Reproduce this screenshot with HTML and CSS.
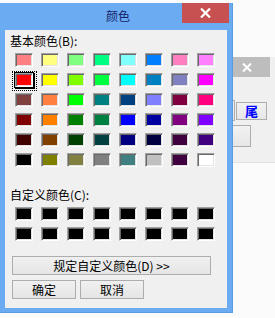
FILE: index.html
```html
<!DOCTYPE html>
<html lang="zh-CN">
<head>
<meta charset="utf-8">
<title>颜色</title>
<link rel="stylesheet" href="styles.css">
</head>
<body>
<div class="desktop">
  <div class="bgwin">
    <div class="bg-title">
      <span class="bg-close"><svg width="10" height="9" viewBox="0 0 10 9"><path d="M1 0.5 L9 8.5 M9 0.5 L1 8.5" stroke="#fff" stroke-width="2"/></svg></span>
    </div>
    <div class="bg-body">
      <div class="bg-row">
        <span class="bg-btn ghost"></span>
        <span class="bg-btn blue">尾</span>
      </div>
      <div class="bg-row2">
        <span class="bg-btn wide"></span>
      </div>
    </div>
  </div>

  <div class="dialog">
    <div class="titlebar">
      <span></span>
      <span class="title">颜色</span>
      <span class="close"><svg width="11" height="10" viewBox="0 0 11 10"><path d="M1 0.5 L10 9.5 M10 0.5 L1 9.5" stroke="#fff" stroke-width="2.2"/></svg></span>
    </div>
    <div class="client">
      <div class="label">基本颜色(B):</div>
      <div class="grid basic">
        <span class="sw" style="background:#ff8080"></span>
        <span class="sw" style="background:#ffff80"></span>
        <span class="sw" style="background:#80ff80"></span>
        <span class="sw" style="background:#00ff80"></span>
        <span class="sw" style="background:#80ffff"></span>
        <span class="sw" style="background:#0080ff"></span>
        <span class="sw" style="background:#ff80c0"></span>
        <span class="sw" style="background:#ff80ff"></span>

        <span class="sw sel" style="background:#ff0000"></span>
        <span class="sw" style="background:#ffff00"></span>
        <span class="sw" style="background:#80ff00"></span>
        <span class="sw" style="background:#00ff40"></span>
        <span class="sw" style="background:#00ffff"></span>
        <span class="sw" style="background:#0080c0"></span>
        <span class="sw" style="background:#8080c0"></span>
        <span class="sw" style="background:#ff00ff"></span>

        <span class="sw" style="background:#804040"></span>
        <span class="sw" style="background:#ff8040"></span>
        <span class="sw" style="background:#00ff00"></span>
        <span class="sw" style="background:#008080"></span>
        <span class="sw" style="background:#004080"></span>
        <span class="sw" style="background:#8080ff"></span>
        <span class="sw" style="background:#800040"></span>
        <span class="sw" style="background:#ff0080"></span>

        <span class="sw" style="background:#800000"></span>
        <span class="sw" style="background:#ff8000"></span>
        <span class="sw" style="background:#008000"></span>
        <span class="sw" style="background:#008040"></span>
        <span class="sw" style="background:#0000ff"></span>
        <span class="sw" style="background:#0000a0"></span>
        <span class="sw" style="background:#800080"></span>
        <span class="sw" style="background:#8000ff"></span>

        <span class="sw" style="background:#400000"></span>
        <span class="sw" style="background:#804000"></span>
        <span class="sw" style="background:#004000"></span>
        <span class="sw" style="background:#004040"></span>
        <span class="sw" style="background:#000080"></span>
        <span class="sw" style="background:#000040"></span>
        <span class="sw" style="background:#400040"></span>
        <span class="sw" style="background:#400080"></span>

        <span class="sw" style="background:#000000"></span>
        <span class="sw" style="background:#808000"></span>
        <span class="sw" style="background:#808040"></span>
        <span class="sw" style="background:#808080"></span>
        <span class="sw" style="background:#408080"></span>
        <span class="sw" style="background:#c0c0c0"></span>
        <span class="sw" style="background:#400040"></span>
        <span class="sw" style="background:#ffffff"></span>
      </div>

      <div class="label custom-label">自定义颜色(C):</div>
      <div class="grid custom">
        <span class="sw black"></span><span class="sw black"></span><span class="sw black"></span><span class="sw black"></span>
        <span class="sw black"></span><span class="sw black"></span><span class="sw black"></span><span class="sw black"></span>
        <span class="sw black"></span><span class="sw black"></span><span class="sw black"></span><span class="sw black"></span>
        <span class="sw black"></span><span class="sw black"></span><span class="sw black"></span><span class="sw black"></span>
      </div>

      <button class="btn define">规定自定义颜色(D) &gt;&gt;</button>
      <div class="actions">
        <button class="btn act">确定</button>
        <button class="btn act">取消</button>
      </div>
    </div>
  </div>
</div>
</body>
</html>
```

FILE: styles.css
```css
* { box-sizing: border-box; }

html, body {
  margin: 0;
  padding: 0;
  background: #fbfbfb;
}

body {
  font-family: "Noto Sans CJK SC", "Noto Sans", sans-serif;
  font-size: 12px;
  color: #000;
}

.desktop {
  position: relative;
  width: 275px;
  height: 318px;
  overflow: hidden;
  background: #fbfbfb;
}

/* background window */
.bgwin {
  position: absolute;
  left: 150px;
  top: 57px;
  width: 125px;
  height: 106px;
  background: #f0f0f0;
  border-bottom: 1px solid #e2e2e2;
}

.bg-title {
  height: 20px;
  margin-right: 5px;
  background: #bdbdbd;
  display: flex;
  justify-content: flex-end;
  align-items: center;
  padding-right: 18px;
}

.bg-close {
  display: flex;
}

.bg-body {
  padding-top: 23px;
}

.bg-row {
  display: flex;
  align-items: center;
  gap: 1px;
  margin-left: 25px;
  height: 21px;
}

.bg-btn {
  display: flex;
  align-items: center;
  justify-content: center;
  border: 1px solid #adadad;
  background: linear-gradient(#f2f2f2, #e6e6e6);
}

.bg-btn.ghost {
  width: 60px;
  height: 21px;
}

.bg-btn.blue {
  width: 31px;
  height: 18px;
  color: #0000ff;
  font-weight: bold;
  font-size: 13px;
  line-height: 1;
}

.bg-row2 {
  margin-top: 4px;
  margin-left: 40px;
}

.bg-btn.wide {
  width: 61px;
  height: 22px;
}

/* dialog */
.dialog {
  position: absolute;
  left: 0;
  top: 3px;
  width: 233px;
  height: 310px;
  background: #6aabf2;
  box-shadow: inset -1px -1px 0 #5c9be0;
  display: flex;
  flex-direction: column;
}

.titlebar {
  height: 27px;
  display: grid;
  grid-template-columns: 1fr auto 1fr;
  align-items: start;
}

.title {
  color: #14236a;
  font-size: 12px;
  line-height: 14px;
  margin-top: 6px;
  margin-left: 3px;
}

.close {
  justify-self: end;
  margin-right: 4px;
  width: 47px;
  height: 20px;
  background: #c75050;
  display: flex;
  align-items: center;
  justify-content: center;
}

.client {
  margin: 0 6px 0 5px;
  height: 278px;
  background: #f0f0f0;
  padding-top: 4px;
  display: flex;
  flex-direction: column;
  align-items: flex-start;
}

.label {
  margin-left: 5px;
  line-height: 14px;
  height: 14px;
  white-space: nowrap;
}

.grid {
  display: grid;
  grid-template-columns: repeat(8, 18px);
  grid-auto-rows: 14px;
  column-gap: 8px;
  row-gap: 6px;
  margin-left: 10px;
  margin-top: 5px;
}

.sw {
  position: relative;
  display: block;
  width: 18px;
  height: 14px;
  border: 1px solid;
  border-color: #a0a0a0 #ffffff #ffffff #a0a0a0;
  box-shadow: inset 1px 1px 0 #696969, inset -1px -1px 0 #e3e3e3;
}

.sw.black {
  background: #000;
}

.sw.sel {
  box-shadow: inset 1px 1px 0 #696969, inset -1px -1px 0 #e3e3e3, 0 0 0 1px #000, 1px 1px 0 1px #000;
}

.sw.sel::after {
  content: "";
  position: absolute;
  left: -4px;
  top: -3px;
  right: -5px;
  bottom: -5px;
  border: 1px dotted #000;
}

.custom-label {
  margin-top: 21px;
}

.custom {
  margin-top: 5px;
}

.btn {
  font-family: "Noto Sans CJK SC", "Noto Sans", sans-serif;
  font-size: 12px;
  color: #000;
  border: 1px solid #adadad;
  background: linear-gradient(#f0f0f0, #e5e5e5);
  padding: 0;
  margin: 0;
  height: 19px;
  line-height: 16px;
  border-radius: 0;
}

.define {
  margin-top: 15px;
  margin-left: 7px;
  width: 199px;
}

.actions {
  display: flex;
  gap: 4px;
  margin-top: 5px;
  margin-left: 7px;
}

.act {
  width: 64px;
}
```
